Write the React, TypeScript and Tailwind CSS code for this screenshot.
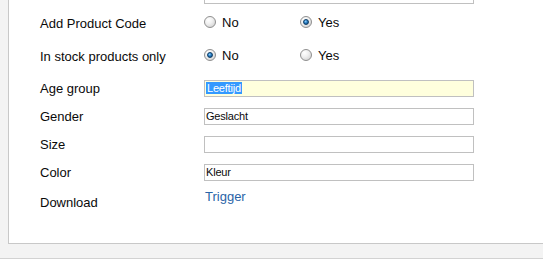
import React from "react";

const Radio: React.FC<{ checked?: boolean; label: string }> = ({ checked, label }) => {
  return (
    <div className="flex items-center w-[96px]">
      <span className="relative w-[12px] h-[12px] rounded-full border border-[#8f8f8f] bg-[radial-gradient(circle_at_35%_30%,#ffffff_0%,#f0f0f0_40%,#c9c9c9_100%)] flex items-center justify-center">
        {checked && (
          <span className="w-[6px] h-[6px] rounded-full bg-[radial-gradient(circle_at_40%_35%,#8fd0ff_0%,#2a7fc4_45%,#0b3f70_100%)] border border-[#0d3d66]" />
        )}
      </span>
      <span className="ml-[6px] text-[13px] leading-[15px]">{label}</span>
    </div>
  );
};

const TextRow: React.FC<{ label: string; value?: string; selected?: boolean }> = ({
  label,
  value,
  selected,
}) => {
  return (
    <div className="grid grid-cols-[164px_270px] h-[28px] pt-[6px]">
      <div className="leading-[17px]">{label}</div>
      <div
        className={`h-[17px] border border-[#c0c0c0] pl-[1px] text-[11px] leading-[15px] tracking-[-0.2px] ${
          selected ? "bg-[#ffffdd]" : "bg-white"
        }`}
      >
        {selected ? (
          <span className="bg-[#3399ff] text-white px-[1px]">{value}</span>
        ) : (
          <span>{value}</span>
        )}
      </div>
    </div>
  );
};

export default function App() {
  return (
    <div className="w-[543px] h-[265px] bg-white overflow-hidden font-['Liberation_Sans',Arial,sans-serif] text-[13px] text-[#0a0a0a]">
      <div className="bg-[#f3f3f3] pl-2 pb-[14px] border-b border-[#d2d2d2]">
        <div className="bg-white border-l border-b border-[#c8c8c8] h-[244px] pl-[31px]">
          <div className="grid grid-cols-[164px_270px] h-[4px]">
            <div />
            <div className="h-[4px] border-x border-b border-[#c0c0c0]" />
          </div>

          <div className="grid grid-cols-[164px_270px] h-[36px] items-center">
            <div className="leading-[15px] pt-[2px]">Add Product Code</div>
            <div className="flex">
              <Radio label="No" />
              <Radio label="Yes" checked />
            </div>
          </div>

          <div className="grid grid-cols-[164px_270px] h-[34px] pb-[4px] items-center">
            <div className="leading-[15px] pt-[2px]">In stock products only</div>
            <div className="flex">
              <Radio label="No" checked />
              <Radio label="Yes" />
            </div>
          </div>

          <TextRow label="Age group" value="Leeftijd" selected />
          <TextRow label="Gender" value="Geslacht" />
          <TextRow label="Size" value="" />
          <TextRow label="Color" value="Kleur" />

          <div className="grid grid-cols-[164px_270px]">
            <div className="pt-[9px] leading-[15px]">Download</div>
            <div className="pt-[3px] leading-[15px] pl-[1px]">
              <a href="#" className="text-[#2a64a8]">
                Trigger
              </a>
            </div>
          </div>
        </div>
      </div>
    </div>
  );
}
